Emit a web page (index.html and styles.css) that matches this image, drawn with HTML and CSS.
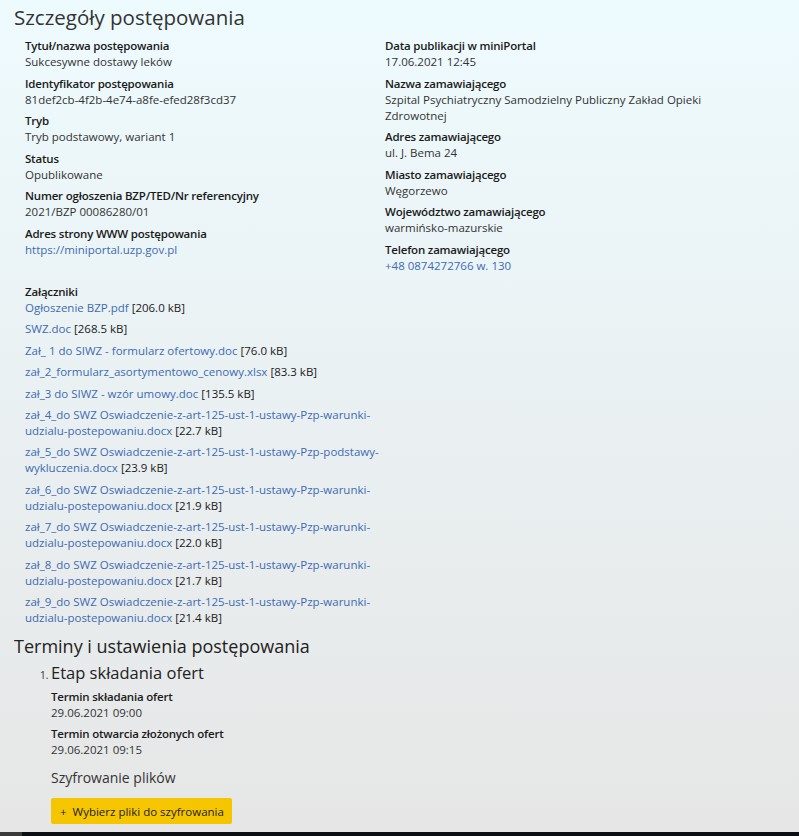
FILE: index.html
```html
<!DOCTYPE html>
<html lang="pl">
<head>
  <meta charset="utf-8">
  <title>Szczegóły postępowania</title>
  <link rel="stylesheet" href="styles.css">
</head>
<body>
  <div class="page">
    <h1 class="page-title">Szczegóły postępowania</h1>

    <div class="details">
      <div class="details-col">
        <div class="field">
          <div class="field-label">Tytuł/nazwa postępowania</div>
          <div class="field-value">Sukcesywne dostawy leków</div>
        </div>
        <div class="field">
          <div class="field-label">Identyfikator postępowania</div>
          <div class="field-value">81def2cb-4f2b-4e74-a8fe-efed28f3cd37</div>
        </div>
        <div class="field">
          <div class="field-label">Tryb</div>
          <div class="field-value">Tryb podstawowy, wariant 1</div>
        </div>
        <div class="field">
          <div class="field-label">Status</div>
          <div class="field-value">Opublikowane</div>
        </div>
        <div class="field">
          <div class="field-label">Numer ogłoszenia BZP/TED/Nr referencyjny</div>
          <div class="field-value">2021/BZP 00086280/01</div>
        </div>
        <div class="field">
          <div class="field-label">Adres strony WWW postępowania</div>
          <div class="field-value"><a href="#">https://miniportal.uzp.gov.pl</a></div>
        </div>
      </div>

      <div class="details-col">
        <div class="field">
          <div class="field-label">Data publikacji w miniPortal</div>
          <div class="field-value">17.06.2021 12:45</div>
        </div>
        <div class="field">
          <div class="field-label">Nazwa zamawiającego</div>
          <div class="field-value">Szpital Psychiatryczny Samodzielny Publiczny Zakład Opieki Zdrowotnej</div>
        </div>
        <div class="field">
          <div class="field-label">Adres zamawiającego</div>
          <div class="field-value">ul. J. Bema 24</div>
        </div>
        <div class="field">
          <div class="field-label">Miasto zamawiającego</div>
          <div class="field-value">Węgorzewo</div>
        </div>
        <div class="field">
          <div class="field-label">Województwo zamawiającego</div>
          <div class="field-value">warmińsko-mazurskie</div>
        </div>
        <div class="field">
          <div class="field-label">Telefon zamawiającego</div>
          <div class="field-value"><a href="#">+48 0874272766 w. 130</a></div>
        </div>
      </div>
    </div>

    <div class="attachments">
      <div class="field-label">Załączniki</div>
      <ul class="attachment-list">
        <li><a href="#">Ogłoszenie BZP.pdf</a> [206.0 kB]</li>
        <li><a href="#">SWZ.doc</a> [268.5 kB]</li>
        <li><a href="#">Zał_ 1 do SIWZ - formularz ofertowy.doc</a> [76.0 kB]</li>
        <li><a href="#">zał_2_formularz_asortymentowo_cenowy.xlsx</a> [83.3 kB]</li>
        <li><a href="#">zał_3 do SIWZ - wzór umowy.doc</a> [135.5 kB]</li>
        <li><a href="#">zał_4_do SWZ Oswiadczenie-z-art-125-ust-1-ustawy-Pzp-warunki-udzialu-postepowaniu.docx</a> [22.7 kB]</li>
        <li><a href="#">zał_5_do SWZ Oswiadczenie-z-art-125-ust-1-ustawy-Pzp-podstawy-wykluczenia.docx</a> [23.9 kB]</li>
        <li><a href="#">zał_6_do SWZ Oswiadczenie-z-art-125-ust-1-ustawy-Pzp-warunki-udzialu-postepowaniu.docx</a> [21.9 kB]</li>
        <li><a href="#">zał_7_do SWZ Oswiadczenie-z-art-125-ust-1-ustawy-Pzp-warunki-udzialu-postepowaniu.docx</a> [22.0 kB]</li>
        <li><a href="#">zał_8_do SWZ Oswiadczenie-z-art-125-ust-1-ustawy-Pzp-warunki-udzialu-postepowaniu.docx</a> [21.7 kB]</li>
        <li><a href="#">zał_9_do SWZ Oswiadczenie-z-art-125-ust-1-ustawy-Pzp-warunki-udzialu-postepowaniu.docx</a> [21.4 kB]</li>
      </ul>
    </div>

    <h2 class="section-title">Terminy i ustawienia postępowania</h2>
    <ol class="stages">
      <li class="stage">
        <h3 class="stage-title">Etap składania ofert</h3>
        <div class="field">
          <div class="field-label">Termin składania ofert</div>
          <div class="field-value">29.06.2021 09:00</div>
        </div>
        <div class="field">
          <div class="field-label">Termin otwarcia złożonych ofert</div>
          <div class="field-value">29.06.2021 09:15</div>
        </div>
        <h4 class="sub-title">Szyfrowanie plików</h4>
        <button class="btn-yellow" type="button">+&nbsp; Wybierz pliki do szyfrowania</button>
      </li>
    </ol>
  </div>

  <div class="taskbar"><span class="taskbar-start"></span></div>
</body>
</html>
```

FILE: styles.css
```css
html, body {
  margin: 0;
  height: 100%;
}
body {
  font-family: 'Open Sans', 'Noto Sans', sans-serif;
  font-size: 11.5px;
  line-height: 16px;
  color: #333;
  background: linear-gradient(to bottom, #eefbfe 0%, #eaf1f3 45%, #e6e6e6 100%);
  overflow: hidden;
}
a {
  color: #3d6bb3;
  text-decoration: none;
}
.page {
  padding: 3px 14px 0 14px;
}
.page-title {
  font-size: 20.5px;
  font-weight: 400;
  line-height: 28px;
  margin: 0 0 7px 0;
  color: #333;
}
.details {
  display: grid;
  grid-template-columns: 360px 340px;
  padding-left: 11px;
}
.field {
  margin-bottom: 5.5px;
}
.field-label {
  font-weight: 600;
  color: #1a1a1a;
  letter-spacing: -0.2px;
}
.field-value {
  color: #333;
}
.attachments {
  padding-left: 11px;
  margin-top: 5px;
  width: 358px;
}
.attachment-list {
  list-style: none;
  margin: 0;
  padding: 0;
}
.attachment-list li {
  margin-bottom: 5.4px;
  color: #1a1a1a;
}
.section-title {
  font-size: 18px;
  font-weight: 400;
  line-height: 24px;
  margin: 8px 0 0 0;
  color: #222;
}
.stages {
  margin: 3px 0 0 0;
  padding-left: 37px;
  font-size: 10px;
}
.stage-title {
  display: inline;
  font-size: 16.5px;
  font-weight: 400;
  line-height: 24px;
  color: #222;
}
.stage .field {
  font-size: 11.5px;
}
.stage .field:first-of-type {
  margin-top: 4px;
}
.sub-title {
  font-size: 14px;
  font-weight: 400;
  line-height: 20px;
  margin: 10px 0 10px 0;
  color: #333;
}
.btn-yellow {
  background: #f5c500;
  border: none;
  border-radius: 2px;
  font-family: inherit;
  font-size: 11.5px;
  color: #222;
  padding: 4px 8px 4px 9px;
  height: 26px;
  cursor: pointer;
}
.taskbar {
  position: fixed;
  left: 0;
  right: 0;
  bottom: 0;
  height: 4px;
  background: #0b0f14;
}
.taskbar-start {
  display: block;
  width: 22px;
  height: 4px;
  background: #3a3a3a;
}
```
